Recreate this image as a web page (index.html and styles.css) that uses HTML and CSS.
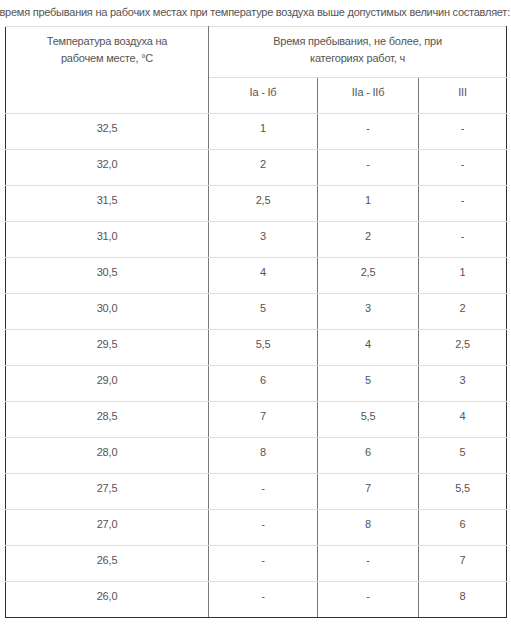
FILE: index.html
```html
<!DOCTYPE html>
<html lang="ru">
<head>
<meta charset="utf-8">
<title>Время пребывания</title>
<link rel="stylesheet" href="styles.css">
</head>
<body>
<div class="intro"><span class="intro-text">Допустимое время пребывания на рабочих местах при температуре воздуха выше допустимых величин составляет:</span></div>
<table class="tbl">
  <colgroup>
    <col class="c1"><col class="c2"><col class="c3"><col class="c4">
  </colgroup>
  <thead>
    <tr class="h1">
      <th rowspan="2">Температура воздуха на<br>рабочем месте, °С</th>
      <th colspan="3">Время пребывания, не более, при<br>категориях работ, ч</th>
    </tr>
    <tr class="h2">
      <th>Iа - Iб</th>
      <th>IIа - IIб</th>
      <th>III</th>
    </tr>
  </thead>
  <tbody>
    <tr><td>32,5</td><td>1</td><td>-</td><td>-</td></tr>
    <tr><td>32,0</td><td>2</td><td>-</td><td>-</td></tr>
    <tr><td>31,5</td><td>2,5</td><td>1</td><td>-</td></tr>
    <tr><td>31,0</td><td>3</td><td>2</td><td>-</td></tr>
    <tr><td>30,5</td><td>4</td><td>2,5</td><td>1</td></tr>
    <tr><td>30,0</td><td>5</td><td>3</td><td>2</td></tr>
    <tr><td>29,5</td><td>5,5</td><td>4</td><td>2,5</td></tr>
    <tr><td>29,0</td><td>6</td><td>5</td><td>3</td></tr>
    <tr><td>28,5</td><td>7</td><td>5,5</td><td>4</td></tr>
    <tr><td>28,0</td><td>8</td><td>6</td><td>5</td></tr>
    <tr><td>27,5</td><td>-</td><td>7</td><td>5,5</td></tr>
    <tr><td>27,0</td><td>-</td><td>8</td><td>6</td></tr>
    <tr><td>26,5</td><td>-</td><td>-</td><td>7</td></tr>
    <tr><td>26,0</td><td>-</td><td>-</td><td>8</td></tr>
  </tbody>
</table>
</body>
</html>
```
FILE: styles.css
```css
html, body {
  margin: 0;
  padding: 0;
  background: #fff;
}
body {
  font-family: "Liberation Sans", Arial, sans-serif;
  font-size: 11px;
  line-height: 17px;
  letter-spacing: -0.2px;
  color: #555;
}
.intro {
  display: flex;
  justify-content: flex-end;
  overflow: hidden;
  white-space: nowrap;
  padding: 4px 1px 0 0;
  margin-bottom: 5px;
  letter-spacing: -0.24px;
}
.intro-text {
  flex-shrink: 0;
}
.tbl {
  border-collapse: collapse;
  table-layout: fixed;
  margin-left: 5px;
  width: 501px;
  border-left: 1px solid #333;
  border-right: 1px solid #333;
  border-bottom: 1px solid #333;
}
.c1 { width: 203px; }
.c2 { width: 109px; }
.c3 { width: 101px; }
.c4 { width: 88px; }
.tbl th, .tbl td {
  font-weight: normal;
  text-align: center;
  vertical-align: top;
  padding: 6px 4px 0;
  border-top: 1px solid #ddd;
  border-bottom: 1px solid #ddd;
  border-left: 1px solid #777;
  border-right: 1px solid #777;
}
.tbl th:first-child, .tbl td:first-child {
  border-left: 1px solid #333;
}
.tbl tr > :last-child {
  border-right: 1px solid #333;
}
.tbl tbody tr:last-child td {
  border-bottom: 1px solid #333;
}
.h1 th { height: 44px; }
.h2 th { height: 29px; }
.tbl tbody td { height: 29px; }
```
